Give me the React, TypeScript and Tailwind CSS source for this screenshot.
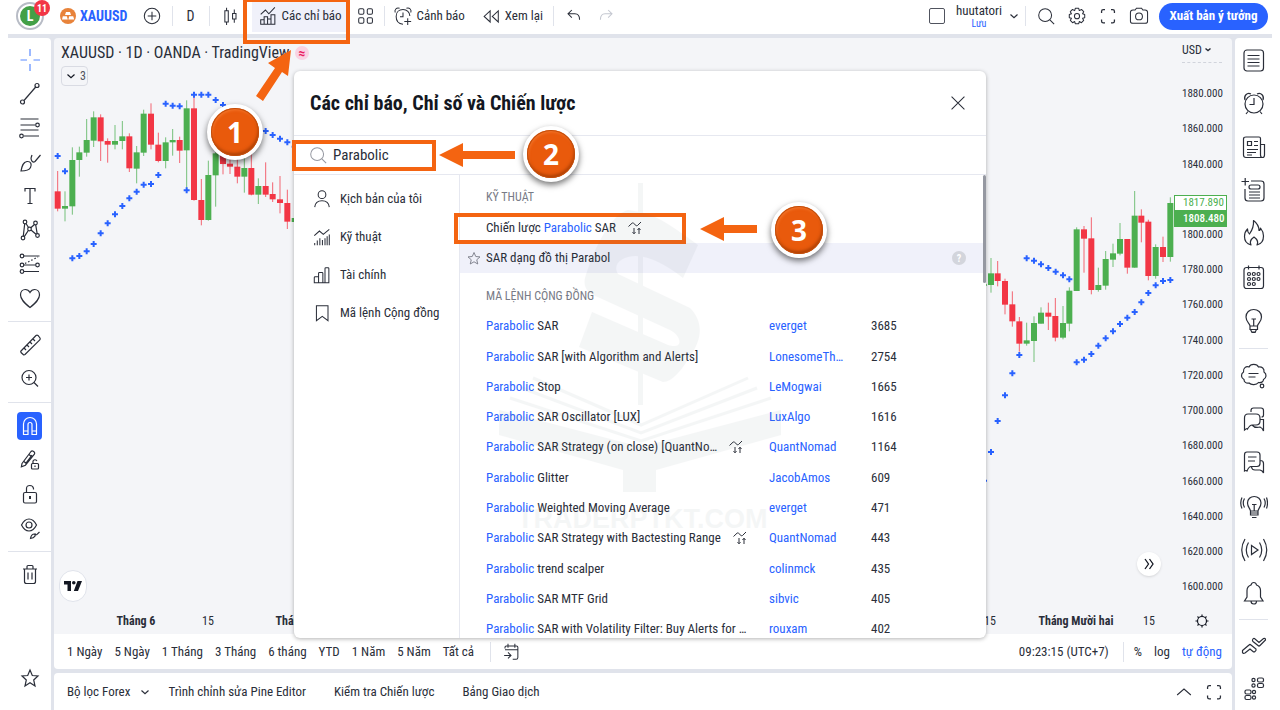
import type { ReactNode } from "react";

/* ---------- icon helper ---------- */

type IconProps = { children: ReactNode; className?: string };

function Icon({ children, className = "size-7" }: IconProps) {
  return (
    <svg
      viewBox="0 0 28 28"
      className={`${className} shrink-0`}
      fill="none"
      stroke="currentColor"
      strokeWidth="1.2"
      aria-hidden="true"
    >
      {children}
    </svg>
  );
}

/* ---------- left drawing tools ---------- */

const Crosshair = (
  <Icon>
    <path d="M14 3v7M14 18v7M4.500 14h6.500M17.500 14h6.500" stroke="#5b8bff" />
  </Icon>
);
const TrendLine = (
  <Icon>
    <circle cx="6.500" cy="22" r="2" />
    <circle cx="21" cy="5.500" r="2" />
    <path d="M8 20.500 19.700 7" />
  </Icon>
);
const FibLines = (
  <Icon>
    <path d="M4.500 5h18M4.500 11h14.500M4.500 16h18M8 22h15" />
    <circle cx="21.500" cy="11" r="1.800" />
    <circle cx="5.500" cy="22" r="1.800" />
  </Icon>
);
const Brush = (
  <Icon>
    <path d="M5 23c1-5 2-9 6-9.500 4-.3 5 3 3.500 6C13 22.500 9 23 5 23z" />
    <path d="M15 10c0 3 2 5 4 3.500L24.500 7M15 10l1-3" />
  </Icon>
);
const TextTool = (
  <Icon>
    <path d="M9 9.500V6.500h10v3M14 6.500v15M11.500 21.500h5" />
  </Icon>
);
const Pattern = (
  <Icon>
    <circle cx="9" cy="6" r="1.800" />
    <circle cx="19.500" cy="7" r="1.800" />
    <circle cx="13.500" cy="13" r="1.800" />
    <circle cx="7" cy="22" r="1.800" />
    <circle cx="21.500" cy="19.500" r="1.800" />
    <path d="M8.700 7.800 7.300 20M10 7.500l2.500 4M18.500 8.500l-3.700 3.300M19.700 8.800l1.500 9M8.300 20.700l4-6.200M15 14l5 4.300" />
  </Icon>
);
const Forecast = (
  <Icon>
    <path d="M8 6h15.500M8 15h11.500M8 21.500h15" />
    <path d="M9 13.500 22 7" strokeDasharray="1.500 2" />
    <circle cx="6" cy="6" r="1.800" />
    <circle cx="6" cy="15" r="1.800" />
    <circle cx="21.500" cy="15" r="1.800" />
    <circle cx="6" cy="21.500" r="1.800" />
  </Icon>
);
const Heart = (
  <Icon>
    <path d="M14 23.500C8.500 19 4.500 15.500 4.500 11 4.500 7.500 6.800 5.500 9.300 5.500c2 0 3.700 1.200 4.700 3 1-1.800 2.700-3 4.700-3 2.500 0 4.800 2 4.800 5.500 0 4.500-4 8-9.500 12.500z" />
  </Icon>
);
const Ruler = (
  <Icon>
    <path d="M5 20 20 4.500q1-.8 2 0l2 2.500q.6 1-.2 1.800L9 23.500q-1 .7-1.800 0L5 21.500q-.6-.8 0-1.500zM8 17l2 2M11 14l2 2M14 11l2 2M17 8l2 2M20 5.500" />
  </Icon>
);
const ZoomIn = (
  <Icon>
    <circle cx="13" cy="12.500" r="7" />
    <path d="M13 9.500v6M10 12.500h6M18 17.500l4 4" />
  </Icon>
);
const Magnet = (
  <Icon>
    <path d="M7.500 22.500V12a6.500 6.500 0 0 1 13 0v10.500H16V12.500a2 2 0 0 0-4 0v10zM7.500 19H12M16 19h4.500" />
  </Icon>
);
const PencilLock = (
  <Icon>
    <path d="m6 17.500 9-12q1-1.200 2.200-.3l1 .8q1 1 .2 2.200l-9 11-4 1.500zM8 15.500l2.500 2.300M13 8.500l3 2.500M10 17l6-8" />
    <rect x="15.500" y="17.500" width="7" height="5.500" rx="1" />
    <path d="M17 17.500V15q2-2.500 4 0M19 19.500v1.500" />
  </Icon>
);
const Unlock = (
  <Icon>
    <rect x="7.500" y="12.500" width="13" height="10.500" rx="1.500" />
    <path d="M10.500 12.500V8.500c0-4 6.500-4 7 0v1" />
    <path d="M14 16v3" strokeWidth="2" />
  </Icon>
);
const EyeBrush = (
  <Icon>
    <path d="M5.500 11c4-8 11-8 15 0-4 8-11 8-15 0z" />
    <circle cx="13" cy="11" r="3" />
    <path d="M14.500 24.500c.5-3 2-4.500 4-4.500 1.500 1 .5 4-4 4.500zM19 19.500c.5 1.500 1.500 1.500 2 .8l2.500-2.300" />
  </Icon>
);
const Trash = (
  <Icon>
    <path d="M7 8h14M11 8V5.500q0-1 1-1h4q1 0 1 1V8M8.500 8v12.500q0 2 2 2h7q2 0 2-2V8M12 11.500v7M16 11.500v7" />
  </Icon>
);
const Star = (
  <Icon>
    <path d="m14 6 2.300 5.500 5.700.5-4.300 4 1.300 6-5-3.200L9 22l1.300-6L6 12l5.700-.5z" />
  </Icon>
);

/* ---------- top bar icons ---------- */

const PlusCircle = (
  <Icon className="size-6">
    <circle cx="14" cy="14" r="9" />
    <path d="M14 9v10M9 14h10" />
  </Icon>
);
const CandlesIcon = (
  <Icon className="size-6">
    <path d="M8 8h4v13H8zM10 4.500V8M10 21v3.500M17 11h4v6.500h-4zM19 6.500V11M19 17.500V22" />
  </Icon>
);
const IndicatorIcon = (
  <Icon className="size-6">
    <path d="M5.500 12 11 7l4 4.500L22 4" />
    <path d="M5.500 23.500v-5h4v-3.500h4v2.500h4v-5h4.500v11zM9.500 18.500v5M13.500 17.500v6M17.500 17v6.500" />
  </Icon>
);
const GridIcon = (
  <Icon className="size-6">
    <rect x="5.500" y="5.500" width="6" height="6.500" rx="1.500" />
    <rect x="15.500" y="5.500" width="6" height="6.500" rx="1.500" />
    <rect x="5.500" y="16" width="6" height="6.500" rx="1.500" />
    <rect x="15.500" y="16" width="6" height="6.500" rx="1.500" />
  </Icon>
);
const AlarmAdd = (
  <Icon className="size-6">
    <path d="M14 23.500C8.500 23 6 19 6 14.500 6 9.500 9.500 6.500 14 6.500s8 3 8 7.500M14 10v5h-3.500" />
    <path d="M5 10C3.500 7 6.500 3.500 10 5M23 10c1.500-3-1.500-6.500-5-5M19.500 16.500v8M15.500 20.500h8" />
  </Icon>
);
const Rewind = (
  <Icon className="size-6">
    <path d="m13 8-7 6.500 7 6.500zM22.500 8l-7 6.500 7 6.500z" />
  </Icon>
);
const Undo = (
  <Icon className="size-6">
    <path d="M11.500 7 7 11.500l4.500 4.500M7.500 11.500H15c4 0 5.500 3 5.500 7" />
  </Icon>
);
const Redo = (
  <Icon className="size-6">
    <path d="m16.500 7 4.500 4.500-4.500 4.500M20.500 11.500H13c-4 0-5.500 3-5.500 7" />
  </Icon>
);
const SearchIcon = (
  <Icon className="size-6">
    <circle cx="13" cy="13" r="7.500" />
    <path d="m18.500 18.500 5 5" />
  </Icon>
);
const Gear = (
  <Icon className="size-6">
    <path d="M12 5h4l.7 2.700 2.500-1.300 2.600 2.600-1.300 2.500 2.500.8v3.700l-2.500.7 1.300 2.500-2.600 2.600-2.500-1.300L16 23h-4l-.7-2.500-2.500 1.300-2.600-2.600 1.300-2.500L5 16v-3.700l2.500-.8L6.200 9l2.600-2.600 2.500 1.300z" strokeLinejoin="round" />
    <circle cx="14" cy="14.200" r="3" />
  </Icon>
);
const Fullscreen = (
  <Icon className="size-6">
    <path d="M6.500 10.500V8.500q0-2 2-2h2M17.500 6.500h2q2 0 2 2v2M21.500 18v2q0 2-2 2h-2M10.500 22h-2q-2 0-2-2v-2" strokeWidth="1.500" />
  </Icon>
);
const Camera = (
  <Icon className="size-6">
    <path d="M9.500 7 11 5h6l1.500 2H21q3 0 3 3v10q0 2.500-3 2.500H7q-3 0-3-2.500V10q0-3 3-3z" />
    <circle cx="14" cy="14.500" r="4" />
  </Icon>
);
const ChevronDown = (
  <svg viewBox="0 0 10 10" className="size-2.5 shrink-0" fill="none" stroke="currentColor" strokeWidth="1.200" aria-hidden="true">
    <path d="m1.500 3.500 3.500 3.200 3.500-3.200" />
  </svg>
);

/* ---------- right rail icons ---------- */

const railOne: [string, ReactNode][] = [
  ["Danh sách theo dõi", <Icon key="a"><rect x="4" y="4" width="19.500" height="21" rx="3" /><path d="M7.500 9.500h12M7.500 13h12M7.500 16.500h12M7.500 20h12" /></Icon>],
  ["Cảnh báo", <Icon key="b"><circle cx="14" cy="15" r="9" /><path d="M14 9v6.500H9.500M5 11C3.500 7 7 3 11 5M23 11c1.500-4-2-8-6-6M8 22.500l-2 2.500M20 22.500l2 2.500" /></Icon>],
  ["Tin tức", <Icon key="c"><path d="M6 4h13q1.500 0 1.500 1.500V22q0 2.500 2 2.500H6q-2.500 0-2.500-2.500V6q0-2 2.500-2zM20.500 11.500h4V22q0 2.500-2 2.500M7.500 8.500h4v4h-4zM14 8.500h4M14 12.500h4M7 16.500h11M7 19.500h9M7 22h5" /></Icon>],
  ["Cửa sổ dữ liệu", <Icon key="d"><path d="M5 13v9q0 3 3 3h13q3 0 3-3V8q0-3-3-3H11M1.500 5.500h7.500M5.200 2v7.500" /><rect x="9" y="9" width="11" height="4" rx="2" /><path d="M9 16h11M9 19h11M9 22h11" /></Icon>],
  ["Danh sách nóng", <Icon key="e"><path d="M11 26c-4-1-6.500-4-6.500-8.500 0-3 1-5.500 3-7.500 0 2.500.5 4 2 5 2.500-3.500 4.500-7 4-13.500 4 3 5.500 6.500 5.500 10 1 0 1.500-1 1.500-2.500 2 2.500 3 5 3 8 0 4.500-2.500 8-6.500 9 1.500-3 .5-5.500-3-8-3.500 2.500-4.500 5-3 8z" strokeLinejoin="round" /></Icon>],
  ["Lịch", <Icon key="f"><rect x="4" y="4.500" width="19.500" height="21" rx="2.500" /><path d="M8.500 2.500v4M19 2.500v4" /><circle cx="9" cy="11" r="1.500" /><circle cx="13.800" cy="11" r="1.500" /><circle cx="18.500" cy="11" r="1.500" /><circle cx="9" cy="16" r="1.500" /><circle cx="13.800" cy="16" r="1.500" /><circle cx="18.500" cy="16" r="1.500" /><circle cx="9" cy="21" r="1.500" /><circle cx="13.800" cy="21" r="1.500" /></Icon>],
  ["Ý tưởng của tôi", <Icon key="g"><path d="M10 20c0-2.500-4-4-4-9 0-4.500 3.500-7.500 7.700-7.500s7.800 3 7.800 7.500c0 5-4 6.500-4 9zM10 20v3.500h7.500V20M11.500 26H16M10.500 23.500l1.500 3h3l1.500-3M13.700 13v7M11.500 13H16" /></Icon>],
];

const railTwo: [string, ReactNode][] = [
  ["Trò chuyện công khai", <Icon key="a"><path d="M9 22c-3 .5-5-1-5-3.500-3-1.500-3.500-5.500-.5-7.500C3 7 6 5 9 6c1.500-3.500 8-3.500 9.500 0 3.500-.5 6 1.500 5.500 5 3 2 2.500 6-.5 7.500 0 2.500-2.500 3.500-5 3-2 2.500-7 3-9.500.5z" /><path d="M8.500 12.500h10M8.500 16h7" /><circle cx="22" cy="25" r="1.800" /></Icon>],
  ["Trò chuyện riêng", <Icon key="b"><path d="M11 7V5.500Q11 3 13.500 3H21q2.500 0 2.500 2.500V10q0 2-2 2M8 9h8q4 0 4 4v3q0 4-4 4h-4q-2 0-4.500 4-.5-1-3 1V13q0-4 3.500-4zM20.500 14.500h3V26q-1-3-3.500-4-5 1.500-8-2" /></Icon>],
  ["Luồng ý tưởng", <Icon key="c"><path d="M7 4h10q3 0 3 3v8.500q0 3-3 3h-6q-2 0-4 4.500-1-1-2.500 0V7q0-3 2.500-3zM8 9h8.500M8 13h7M20.500 12.500q3 0 3 3V25q-1-2.500-3.500-3h-5q-3 0-3.500-3" /></Icon>],
  ["Phát ý tưởng", <Icon key="d"><path d="M10.500 19c0-2-3-4-3-8 0-4 3-6.500 6.700-6.500S21 7 21 11c0 4-3 6-3 8zM10.500 19v4h7.500v-4M10.500 21h7.500M12 25.500h4.500M14.200 12.500V19M12 12.500h4.500M4.500 6.500q-2.500 4.500 0 9M2 5.500q-2.500 5.500 0 11M24 6.500q2.500 4.500 0 9M26.500 5.500q2 5.500 0 11" /></Icon>],
  ["Phát trực tiếp", <Icon key="e"><path d="m11.500 9.500 6.500 4.500-6.500 4.500zM8.500 6.500q-4.500 7.500 0 15M5 3q-6.500 11 0 22M19.500 6.500q4.500 7.500 0 15M23.500 3q6.500 11 0 22" /></Icon>],
  ["Thông báo", <Icon key="f"><path d="M4.500 22H23l-2.500-4v-6.500q0-4-4-5.500-.5-2.500-2.700-2.500T11 6Q7 7.500 7 11.500V18zM11 22q0 3 2.800 3t2.700-3" /></Icon>],
];

const railThree: [string, ReactNode][] = [
  ["Bảng lệnh", <Icon key="a"><path d="M2.500 18.500 9 13q1-1 2 0l5 4q.5 1.500-1 2.500-1 .8-2 0L10 17l-5 4q-2 1-2.500-.5zM12.500 8q.5-2 2-1.500l4.500 4 4.500-4q2-.8 2 1.500L20 13.500q-1 1-2 0l-5-4q-.7-.8-.5-1.500z" /></Icon>],
  ["Độ sâu thị trường", <Icon key="b"><circle cx="13.500" cy="5" r="1.600" /><rect x="17.500" y="3" width="6" height="4" rx="1.500" /><circle cx="13.500" cy="10.500" r="1.600" /><rect x="17.500" y="8.500" width="6" height="4" rx="1.500" /><rect x="5" y="15" width="6" height="4" rx="1.500" /><circle cx="14" cy="17" r="1.600" /><rect x="5" y="20.500" width="6" height="4" rx="1.500" /><circle cx="14" cy="22.500" r="1.600" /></Icon>],
];

const StrategyIcon = (
  <svg viewBox="0 0 14 14" className="h-3.5 w-3.5 shrink-0" fill="none" stroke="currentColor" strokeWidth="1" aria-label="Chiến lược">
    <path d="M.5 5.500 4 2.200q.8-.6 1.500 0L8 4.500q.8.600 1.500 0L13 1M6 7v5.500M4.500 11.200 6 12.800l1.500-1.600M11 13V7.500M9.500 9 11 7.200 12.500 9" />
  </svg>
);

/* ---------- chart ---------- */

type Candle = [number, number, number, number, number, "g" | "r"];

const leftCandles: Candle[] = [
  [173, 393, 454, 506, 514, "r"], [195, 454, 498, 506, 544, "g"], [217, 322, 360, 499, 524, "g"],
  [238, 320, 337, 360, 410, "g"], [260, 237, 300, 338, 350, "g"], [281, 214, 232, 302, 321, "g"],
  [302, 223, 232, 304, 363, "r"], [323, 295, 303, 314, 368, "r"], [345, 255, 303, 314, 328, "g"],
  [367, 243, 289, 303, 328, "g"], [388, 280, 289, 385, 396, "r"], [410, 318, 337, 386, 430, "g"],
  [431, 209, 221, 338, 348, "g"], [453, 190, 221, 314, 328, "r"], [475, 278, 314, 363, 367, "r"],
  [497, 292, 307, 363, 385, "g"], [518, 267, 300, 307, 347, "g"], [539, 290, 300, 332, 369, "r"],
  [560, 181, 205, 331, 450, "g"], [582, 168, 205, 480, 482, "r"], [604, 417, 480, 540, 556, "r"],
  [625, 362, 405, 540, 542, "g"], [647, 330, 340, 406, 500, "g"], [669, 335, 340, 372, 403, "r"],
  [690, 350, 371, 380, 402, "r"], [712, 340, 380, 410, 430, "r"], [733, 340, 384, 410, 458, "g"],
  [754, 340, 384, 464, 466, "r"], [775, 415, 438, 464, 492, "g"], [797, 367, 438, 464, 471, "r"],
  [818, 427, 462, 478, 486, "r"], [840, 408, 478, 489, 520, "r"], [862, 449, 489, 545, 567, "r"],
  [884, 534, 534, 546, 546, "g"],
];

const rightCandles: Candle[] = [
  [72, 343, 343, 347, 347, "g"], [93, 264, 310, 345, 368, "g"], [113, 273, 310, 333, 349, "r"],
  [135, 326, 333, 404, 433, "r"], [157, 364, 403, 454, 470, "r"], [178, 441, 454, 521, 545, "r"],
  [200, 458, 511, 521, 527, "g"], [222, 439, 459, 513, 576, "g"], [243, 412, 428, 461, 461, "g"],
  [265, 398, 428, 440, 480, "r"], [286, 384, 438, 503, 514, "r"], [309, 408, 459, 503, 508, "g"],
  [328, 352, 362, 461, 484, "g"], [350, 172, 178, 363, 363, "g"], [372, 168, 178, 206, 308, "r"],
  [394, 142, 205, 360, 373, "r"], [415, 293, 345, 360, 365, "g"], [437, 243, 267, 347, 359, "g"],
  [459, 221, 250, 269, 291, "g"], [480, 159, 207, 251, 256, "g"], [502, 207, 207, 293, 311, "r"],
  [524, 63, 137, 293, 293, "g"], [544, 118, 137, 158, 217, "r"], [565, 149, 155, 318, 331, "r"],
  [587, 223, 231, 318, 326, "g"], [609, 200, 231, 261, 276, "r"], [631, 82, 99, 261, 275, "g"],
];

const leftSar = [
  [173, 348], [195, 394], [217, 655], [238, 648], [260, 634], [281, 612], [302, 580], [323, 550],
  [345, 523], [367, 498], [388, 475], [410, 455], [431, 434], [453, 432], [475, 405], [497, 191],
  [518, 197], [539, 199], [560, 451], [582, 164], [604, 164], [625, 164], [647, 180], [669, 195],
  [797, 273], [818, 285], [840, 296], [862, 307], [884, 320],
];

const rightSar = [
  [72, 932], [93, 846], [113, 753], [135, 676], [157, 610], [178, 555], [200, 265], [222, 272], [243, 283],
  [265, 294], [287, 305], [309, 316], [328, 328], [350, 577], [372, 569], [394, 552], [415, 527],
  [437, 505], [459, 484], [480, 462], [502, 443], [524, 426], [544, 397], [565, 369], [587, 346],
  [609, 333], [631, 330],
];

function Series({ candles, sar, transform }: { candles: Candle[]; sar: number[][]; transform: string }) {
  return (
    <g transform={transform}>
      {candles.map(([x, high, top, bottom, low, kind]) => (
        <g key={x} fill={kind === "g" ? "#4caf50" : "#f23645"}>
          <rect x={x - 1.5} y={high} width="3" height={low - high} opacity="0.75" />
          <rect x={x - 9} y={top} width="18" height={Math.max(bottom - top, 2)} />
        </g>
      ))}
      {sar.map(([x, y]) => (
        <path key={`${x}-${y}`} d={`M${x - 9} ${y}h18M${x} ${y - 9}v18`} stroke="#2962ff" strokeWidth="6" />
      ))}
    </g>
  );
}

const prices = [1880, 1860, 1840, null, 1800, 1780, 1760, 1740, 1720, 1700, 1680, 1660, 1640, 1620, 1600];

function Chart() {
  return (
    <section className="relative flex h-[596px] shrink-0 overflow-hidden rounded-t bg-[#f4f5f8]" aria-label="Biểu đồ">
      <svg className="h-full min-w-0 flex-1" aria-hidden="true">
        <Series candles={leftCandles} sar={leftSar} transform="translate(-54 2) scale(0.33333)" />
        <Series candles={rightCandles} sar={rightSar} transform="translate(906 132) scale(0.33333)" />
        <g fontSize="12" fill="#2a2e39" textAnchor="middle">
          <text x="82" y="587" fontWeight="700">Tháng 6</text>
          <text x="154" y="587">15</text>
          <text x="241" y="587" fontWeight="700">Tháng 7</text>
          <text x="936" y="587">15</text>
          <text x="1022" y="587" fontWeight="700">Tháng Mười hai</text>
          <text x="1095" y="587">15</text>
        </g>
      </svg>
      <div className="flex w-[58px] flex-col text-xs text-[#50535e]">
        <button type="button" className="flex h-6 items-center gap-0.5 pl-2 text-[#2a2e39]">
          USD
          <svg viewBox="0 0 8 8" className="size-2" fill="none" stroke="currentColor" strokeWidth="1.500" aria-hidden="true">
            <path d="m1.500 2.500 2.500 2 2.500-2" />
          </svg>
        </button>
        <div className="ml-2 mr-2.5 border-b border-dashed border-[#d1d4dc]" />
        <ul className="mt-3.5 flex h-[528px] flex-col pl-2 text-[11px] text-[#2a2e39]">
          {prices.map((price, index) => (
            <li key={index} className="flex flex-1 items-center">
              {price ? `${price}.000` : ""}
            </li>
          ))}
        </ul>
        <button type="button" aria-label="Cài đặt biểu đồ" className="ml-5 mt-2">
          <svg viewBox="0 0 16 16" className="size-4" fill="none" stroke="#131722" strokeWidth="1.200" aria-hidden="true">
            <circle cx="8" cy="8" r="4.500" />
            <path d="M8 1.500V3.500M8 12.500v2M1.500 8h2M12.500 8h2M3.500 3.500l1.300 1.300M11.200 11.200l1.300 1.300M12.500 3.500l-1.300 1.300M4.800 11.200l-1.300 1.300" />
          </svg>
        </button>
      </div>

      <span className="absolute left-[7px] top-[5px] text-base leading-5 text-[#2a2e39]">
        XAUUSD · 1D · OANDA · TradingView
      </span>
      <span className="absolute left-[241px] top-2 flex size-3.5 items-center justify-center rounded-full bg-[#f9d2e3] text-sm font-bold leading-none text-[#e91e63]">≈</span>
      <button
        type="button"
        className="absolute left-[7px] top-7 flex h-5 w-[27px] items-center gap-1 rounded-sm border border-[#d9dbe3] px-1 text-xs text-[#50535e]"
      >
        <span className="text-[#131722]">{ChevronDown}</span>3
      </button>
      <div className="absolute right-[5px] top-[157px] flex w-[53px] flex-col text-[11px]">
        <span className="flex h-4 items-center border border-[#4caf50] bg-white pl-2 text-[#4caf50]">1817.890</span>
        <span className="flex h-4 items-center bg-[#4caf50] pl-[9px] font-medium text-white">1808.480</span>
      </div>
      <a
        href="#tradingview"
        aria-label="TradingView"
        className="absolute bottom-8 left-[5px] flex h-8 w-7 items-center justify-center rounded-full border border-[#e0e3eb] bg-white"
      >
        <svg viewBox="0 0 18 12" className="h-3 w-[18px]" fill="#131722" aria-hidden="true">
          <path d="M0 1h7v10H3.500V4.500H0zM13.500 1H18l-4 10H9.800z" />
          <circle cx="9.800" cy="2.800" r="1.800" />
        </svg>
      </a>
      <button
        type="button"
        aria-label="Cuộn tới thanh mới nhất"
        className="absolute bottom-[58px] right-[71px] flex size-6 items-center justify-center rounded-full bg-white shadow"
      >
        <svg viewBox="0 0 12 12" className="size-3" fill="none" stroke="#131722" strokeWidth="1.300" aria-hidden="true">
          <path d="m2 1 3.500 5L2 11M6.500 1 10 6l-3.500 5" />
        </svg>
      </button>
    </section>
  );
}

/* ---------- page parts ---------- */

const Separator = ({ className = "" }: { className?: string }) => (
  <span className={`h-5 w-px shrink-0 bg-[#e0e3eb] ${className}`} />
);

function TopBar() {
  return (
    <header className="flex h-[34px] shrink-0 items-start bg-white pl-4 pr-3 text-[#2a2e39]">
      <div className="flex h-8 flex-1 items-center">
        <button type="button" aria-label="Hồ sơ" className="relative flex size-7 items-center justify-center rounded-full border-2 border-[#b8bcc6] bg-white">
          <span className="flex size-5 items-center justify-center rounded-full bg-[#43a047] text-sm font-bold text-white">L</span>
          <span className="absolute -top-1 left-4 flex size-4 items-center justify-center rounded-full bg-[#f23645] text-[10px] font-bold text-white">11</span>
        </button>
        <button type="button" className="ml-4 flex items-center gap-1 text-sm font-bold text-[#2962ff]">
          <svg viewBox="0 0 16 16" className="size-4" aria-hidden="true">
            <circle cx="8" cy="8" r="8" fill="#e8833a" />
            <path d="M6 4h4l1 3H5zM2.800 8.200h4l1 3.200H2zM9.200 8.200h4l1 3.200H8.400z" fill="#fff" />
          </svg>
          XAUUSD
        </button>
        <button type="button" aria-label="So sánh" className="ml-3">{PlusCircle}</button>
        <Separator className="ml-2" />
        <button type="button" className="w-9 text-sm">D</button>
        <Separator />
        <button type="button" aria-label="Kiểu nến" className="ml-2">{CandlesIcon}</button>
        <button type="button" className="ml-2.5 flex h-8 w-[94px] items-center gap-0.5 whitespace-nowrap bg-[#f0f1fa] pl-1 text-[13px]">
          {IndicatorIcon}Các chỉ báo
        </button>
        <button type="button" aria-label="Mẫu chỉ báo" className="ml-2">{GridIcon}</button>
        <Separator className="ml-1.5" />
        <button type="button" className="ml-1.5 flex items-center gap-0.5 text-[13px]">{AlarmAdd}Cảnh báo</button>
        <button type="button" className="ml-3.5 flex items-center gap-0.5 text-[13px]">{Rewind}Xem lại</button>
        <Separator className="ml-2.5" />
        <button type="button" aria-label="Hoàn tác" className="ml-2">{Undo}</button>
        <button type="button" aria-label="Làm lại" className="ml-2 text-[#c4c7d0]">{Redo}</button>
      </div>
      <div className="flex h-8 items-center">
        <button type="button" aria-label="Bố cục" className="size-4 rounded-xs border border-[#50535e]" />
        <button type="button" className="ml-3 flex w-11 flex-col items-center text-[13px] leading-4">
          huutatori
          <span className="text-[10px] leading-[10px] text-[#2962ff]">Lưu</span>
        </button>
        <span className="ml-2 flex">{ChevronDown}</span>
        <Separator className="ml-1.5 mr-2" />
        <div className="flex gap-[7px]">
          <button type="button" aria-label="Tìm kiếm">{SearchIcon}</button>
          <button type="button" aria-label="Cài đặt">{Gear}</button>
          <button type="button" aria-label="Toàn màn hình">{Fullscreen}</button>
          <button type="button" aria-label="Chụp ảnh">{Camera}</button>
        </div>
        <button type="button" className="ml-2 h-[27px] w-[109px] rounded-full bg-[#2962ff] text-[13px] font-bold text-white">
          Xuất bản ý tưởng
        </button>
      </div>
    </header>
  );
}

const toolGroups: [string, ReactNode][][] = [
  [
    ["Chữ thập", Crosshair], ["Đường xu hướng", TrendLine], ["Fibonacci", FibLines], ["Cọ vẽ", Brush],
    ["Văn bản", TextTool], ["Mô hình", Pattern], ["Dự báo", Forecast], ["Biểu tượng", Heart],
  ],
  [["Đo lường", Ruler], ["Phóng to", ZoomIn]],
  [["Nam châm", Magnet], ["Giữ chế độ vẽ", PencilLock], ["Khoá bản vẽ", Unlock], ["Ẩn bản vẽ", EyeBrush]],
  [["Xoá", Trash]],
];

function DrawingTools() {
  return (
    <nav aria-label="Công cụ vẽ" className="flex w-[43px] shrink-0 flex-col rounded-tr bg-white pb-[15px] pt-[5px] text-[#2a2e39]">
      {toolGroups.map((group, index) => (
        <div key={index} className={index > 0 ? "mt-1.5 border-t border-[#e0e3eb] pt-1.5" : ""}>
          {group.map(([label, icon]) => (
            <div key={label} className="flex h-[34px] items-center justify-center">
              <button
                type="button"
                aria-label={label}
                className={
                  label === "Nam châm"
                    ? "flex h-7 w-[25px] items-center justify-center rounded-sm bg-[#2962ff] text-white"
                    : "flex"
                }
              >
                {icon}
              </button>
            </div>
          ))}
        </div>
      ))}
      <button type="button" aria-label="Yêu thích" className="mt-auto flex h-[34px] items-center justify-center">{Star}</button>
    </nav>
  );
}

function RailGroup({ items, className }: { items: [string, ReactNode][]; className: string }) {
  return (
    <div className={`flex flex-col ${className}`}>
      {items.map(([label, icon]) => (
        <button key={label} type="button" aria-label={label} className="flex flex-1 items-center justify-center">
          {icon}
        </button>
      ))}
    </div>
  );
}

function RightRail() {
  return (
    <aside className="flex w-[37px] shrink-0 flex-col rounded-tl bg-white text-[#2a2e39]">
      <RailGroup items={railOne} className="h-[304px] shrink-0" />
      <hr className="mx-1 mb-1 mt-1.5 border-[#e0e3eb]" />
      <RailGroup items={railTwo} className="h-[262px] shrink-0" />
      <hr className="mx-1 my-1 border-[#e0e3eb]" />
      <RailGroup items={railThree} className="h-[86px] shrink-0" />
    </aside>
  );
}

const ranges = ["1 Ngày", "5 Ngày", "1 Tháng", "3 Tháng", "6 tháng", "YTD", "1 Năm", "5 Năm", "Tất cả"];

function RangeBar() {
  return (
    <div className="flex h-[35px] shrink-0 items-center rounded-b bg-white pl-[13px] pr-2.5 text-[13px] text-[#2a2e39]">
      <div className="flex gap-3">
        {ranges.map((range) => (
          <button key={range} type="button">{range}</button>
        ))}
      </div>
      <Separator className="ml-4" />
      <button type="button" aria-label="Đi tới ngày" className="ml-2">
        <Icon className="size-6">
          <path d="M7 10V8.500Q7 7 8.500 7h12Q22 7 22 8.500v12q0 2-2 2h-4M7 11.500h15M10.500 4.500V9M18.500 4.500V9M6 18h8M10.500 14.500 14 18l-3.500 3.500" />
        </Icon>
      </button>
      <span className="ml-auto">09:23:15 (UTC+7)</span>
      <Separator className="ml-3.5" />
      <button type="button" className="ml-2.5">%</button>
      <button type="button" className="ml-3">log</button>
      <button type="button" className="ml-3 text-[#2962ff]">tự động</button>
    </div>
  );
}

function BottomTabs() {
  return (
    <footer className="mt-1 flex flex-1 items-center rounded-t bg-white pl-[13px] pr-1.5 text-[13px] text-[#2a2e39]">
      <button type="button" className="flex items-center gap-2.5">Bộ lọc Forex{ChevronDown}</button>
      <button type="button" className="ml-[18px]">Trình chỉnh sửa Pine Editor</button>
      <button type="button" className="ml-7">Kiểm tra Chiến lược</button>
      <button type="button" className="ml-7">Bảng Giao dịch</button>
      <div className="ml-auto flex items-center gap-1.5">
        <button type="button" aria-label="Mở bảng">
          <Icon className="size-6"><path d="m6 17.500 8-7 8 7" /></Icon>
        </button>
        <button type="button" aria-label="Phóng to bảng">{Fullscreen}</button>
      </div>
    </footer>
  );
}

/* ---------- indicator dialog ---------- */

const categories: [string, ReactNode][] = [
  ["Kịch bản của tôi", <Icon key="a" className="size-6"><circle cx="14" cy="9" r="4.500" /><path d="M5.500 23.500c.5-5 3.500-7.500 8.500-7.500s8 2.500 8.500 7.500" /></Icon>],
  ["Kỹ thuật", <Icon key="b" className="size-6"><path d="M5 12.500 11 7l4.500 4L22.500 5M5.500 23.500V21M8.500 23.500V18M11.500 23.500V15.500M14.500 23.500V17.500M17.500 23.500V15.500M20 23.500V13M22.500 23.500V11" /></Icon>],
  ["Tài chính", <Icon key="c" className="size-6"><path d="M5 23v-6q0-1 1-1h4v7zM10 23v-11q0-1 1-1h3q1 0 1 1v11M15 20V16M17.500 23V6.500q0-1 1-1H21q1 0 1 1V23zM5 23h17" /></Icon>],
  ["Mã lệnh Cộng đồng", <Icon key="d" className="size-6"><path d="M7.500 5.500h13.500v17.500l-6.700-5-6.800 5z" /></Icon>],
];

type Script = { name: string; author: string; likes: number; strategy?: boolean };

const scripts: Script[] = [
  { name: "SAR", author: "everget", likes: 3685 },
  { name: "SAR [with Algorithm and Alerts]", author: "LonesomeTh…", likes: 2754 },
  { name: "Stop", author: "LeMogwai", likes: 1665 },
  { name: "SAR Oscillator [LUX]", author: "LuxAlgo", likes: 1616 },
  { name: "SAR Strategy (on close) [QuantNo…", author: "QuantNomad", likes: 1164, strategy: true },
  { name: "Glitter", author: "JacobAmos", likes: 609 },
  { name: "Weighted Moving Average", author: "everget", likes: 471 },
  { name: "SAR Strategy with Bactesting Range", author: "QuantNomad", likes: 443, strategy: true },
  { name: "trend scalper", author: "colinmck", likes: 435 },
  { name: "SAR MTF Grid", author: "sibvic", likes: 405 },
  { name: "SAR with Volatility Filter: Buy Alerts for …", author: "rouxam", likes: 402 },
];

function IndicatorDialog() {
  return (
    <div
      role="dialog"
      aria-labelledby="dialog-title"
      className="absolute left-[294px] top-[71px] flex h-[567px] w-[692px] flex-col overflow-hidden rounded-md bg-white text-[#2a2e39] shadow-[0_1px_4px_rgba(0,0,0,0.3)]"
    >
      <div className="flex h-16 shrink-0 items-center justify-between px-4">
        <h2 id="dialog-title" className="text-xl font-bold text-[#131722]">Các chỉ báo, Chỉ số và Chiến lược</h2>
        <button type="button" aria-label="Đóng">
          <Icon className="size-6"><path d="m6.500 6.500 15 15M21.500 6.500l-15 15" /></Icon>
        </button>
      </div>
      <div className="flex h-10 shrink-0 items-center gap-[3px] border-y border-[#e6e8f0] pl-3">
        <label htmlFor="indicator-search" className="text-[#9598a1]" aria-label="Tìm kiếm">{SearchIcon}</label>
        <input id="indicator-search" type="text" defaultValue="Parabolic" className="w-24 bg-transparent text-[15px] outline-none" />
      </div>
      <div className="flex min-h-0 flex-1">
        <ul className="w-[165px] shrink-0 pt-[5px] text-[13px]">
          {categories.map(([label, icon]) => (
            <li key={label}>
              <button type="button" className="flex h-[38px] items-center gap-1.5 pl-4">
                {icon}
                {label}
              </button>
            </li>
          ))}
        </ul>
        <div className="relative min-w-0 flex-1 overflow-hidden border-l border-[#e6e8f0] text-[13px]">
          <h3 className="flex h-[38px] items-center pl-[26px] pt-1.5 text-xs text-[#787b86]">KỸ THUẬT</h3>
          <button type="button" className="flex h-[30px] w-full items-center gap-3 pl-[26px]">
            <span>Chiến lược <span className="text-[#2962ff]">Parabolic</span> SAR</span>
            {StrategyIcon}
          </button>
          <div className="flex h-[30px] items-center bg-[#f0f1fa] pl-[7px] pr-5">
            <button type="button" aria-label="Thêm vào yêu thích" className="text-[#787b86]">
              <Icon className="size-3.5"><path d="m14 3 3.500 8 8.500.8-6.500 5.700 2 8.500-7.500-4.500L6.500 26l2-8.500L2 11.800l8.500-.8z" strokeWidth="1.800" /></Icon>
            </button>
            <button type="button" className="ml-[5px] flex-1 text-left">SAR dạng đồ thị Parabol</button>
            <button type="button" aria-label="Trợ giúp" className="flex size-3.5 items-center justify-center rounded-full bg-[#d3d5dc] text-[10px] font-bold text-white">?</button>
          </div>
          <h3 className="flex h-[38px] items-center pl-[26px] pt-2 text-xs text-[#787b86]">MÃ LỆNH CỘNG ĐỒNG</h3>
          <table className="h-[333px] w-full table-fixed text-left">
            <colgroup>
              <col className="w-[309px]" />
              <col className="w-[102px]" />
              <col />
            </colgroup>
            <tbody>
              {scripts.map((script) => (
                <tr key={script.name}>
                  <td className="pl-[26px]">
                    <span className="flex items-center gap-3 whitespace-nowrap">
                      <span><span className="text-[#2962ff]">Parabolic</span> {script.name}</span>
                      {script.strategy && StrategyIcon}
                    </span>
                  </td>
                  <td><a href={`#${script.author}`} className="text-[#2962ff]">{script.author}</a></td>
                  <td>{script.likes}</td>
                </tr>
              ))}
            </tbody>
          </table>
          <span className="absolute right-0 top-0 h-[108px] w-[3px] rounded-full bg-[#9598a1]" />
        </div>
      </div>
    </div>
  );
}

/* ---------- overlays ---------- */

function Watermark() {
  return (
    <svg viewBox="0 0 290 360" className="pointer-events-none absolute left-[495px] top-[180px] h-[360px] w-[290px]" aria-hidden="true">
      <g transform="translate(-495 -180)" fill="#5b7078" opacity="0.06">
        <path d="M638 183h5v222h-5z" />
        <path d="M585 278C595 245 612 214 628 210L640 212C660 216 680 232 698 245L683 278C668 266 650 256 636 256C622 256 612 264 618 274L690 308C704 322 702 340 690 356C682 370 672 382 663 382L579 347L592 312L668 345C684 350 682 336 670 330L600 298C588 294 583 288 585 278Z" />
        <path d="M499 410 641 447 781 410V435L656 470V492H623V470L499 435Z" />
        <g fill="none" stroke="#5b7078" strokeWidth="3">
          <path d="M533 378 641 425 748 378M522 388 641 433 757 388M510 398 641 441 771 398" />
        </g>
        <text x="517" y="528" fontSize="27" fontWeight="700" fontFamily="Liberation Sans, sans-serif">TRADERPTKT.COM</text>
      </g>
    </svg>
  );
}

function StepBadge({ step, className }: { step: number; className: string }) {
  return (
    <span
      className={`absolute flex size-14 items-center justify-center rounded-full border-4 border-white bg-[#e95a0c] font-['Open_Sans'] text-[28px] font-bold text-white shadow-[0_3px_6px_rgba(0,0,0,0.55)] ${className}`}
    >
      <span className="absolute inset-0 rounded-full shadow-[inset_0_0_0_1px_#c24d0a,inset_-1px_-3px_3px_rgba(140,50,0,0.6),inset_1px_2px_3px_rgba(255,150,80,0.5)]" />
      {step}
    </span>
  );
}

function Annotations() {
  return (
    <div className="pointer-events-none">
      <span className="absolute left-[243px] -top-0.5 h-[46px] w-[107px] border-4 border-[#f46411]" />
      <span className="absolute left-[292px] top-[140px] h-[31px] w-36 border-4 border-[#f46411]" />
      <span className="absolute left-[454px] top-[213px] h-[31px] w-[232px] border-4 border-[#f46411]" />
      <svg viewBox="0 0 510 200" className="absolute left-[250px] top-[45px] h-[200px] w-[510px]" fill="#f46411" aria-hidden="true">
        <path d="M41 5 18 18l7 5L6 51l7 5L32 27l6 4z" />
        <path d="m189 110 24-12v8h52v8h-52v8z" />
        <path d="m450 184 24-12v8h33v8h-33v8z" />
      </svg>
      <StepBadge step={1} className="left-[207px] top-[104px]" />
      <StepBadge step={2} className="left-[523px] top-[126px]" />
      <StepBadge step={3} className="left-[771px] top-[202px]" />
    </div>
  );
}

export default function App() {
  return (
    <div className="relative flex h-screen flex-col overflow-hidden bg-white px-2 font-['Roboto_Condensed',Roboto,sans-serif]">
      <div className="-mx-2">
        <TopBar />
      </div>
      <div className="flex min-h-0 flex-1 bg-[#e0e3eb] pt-1">
        <DrawingTools />
        <main className="mx-[3px] flex min-w-0 flex-1 flex-col">
          <Chart />
          <RangeBar />
          <BottomTabs />
        </main>
        <RightRail />
      </div>
      <IndicatorDialog />
      <Annotations />
      <Watermark />
    </div>
  );
}
